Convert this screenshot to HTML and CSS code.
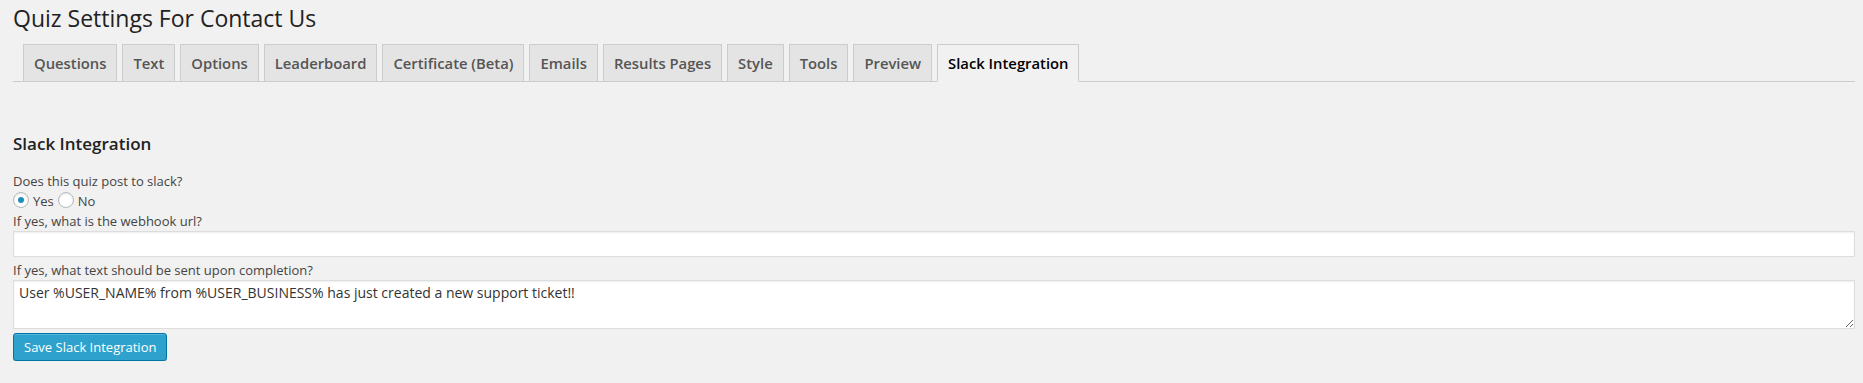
FILE: index.html
```html
<!doctype html>
<html>
    <head>
        <title>Quiz Settings For Contact Us</title>
        <link rel="stylesheet" href="styles.css">
    </head>
    <body>
        <div class="wrap">
            <h1 class="page-title">Quiz Settings For Contact Us</h1>

            <div class="nav-tabs">
                <a class="nav-tab" href="#">Questions</a>
                <a class="nav-tab" href="#">Text</a>
                <a class="nav-tab" href="#">Options</a>
                <a class="nav-tab" href="#">Leaderboard</a>
                <a class="nav-tab" href="#">Certificate (Beta)</a>
                <a class="nav-tab" href="#">Emails</a>
                <a class="nav-tab" href="#">Results Pages</a>
                <a class="nav-tab" href="#">Style</a>
                <a class="nav-tab" href="#">Tools</a>
                <a class="nav-tab" href="#">Preview</a>
                <a class="nav-tab nav-tab-active" href="#">Slack Integration</a>
            </div>

            <h3 class="section-title">Slack Integration</h3>

            <form class="slack-form" onsubmit="return false;">
                <div class="field-label">Does this quiz post to slack?</div>
                <div class="radio-row">
                    <input type="radio" name="slack_post" id="slack_yes" value="1" checked>
                    <label for="slack_yes">Yes</label>
                    <input type="radio" name="slack_post" id="slack_no" value="0">
                    <label for="slack_no">No</label>
                </div>
                <div class="field-label">If yes, what is the webhook url?</div>
                <input type="text" class="text-input" name="slack_url" value="">
                <div class="field-label">If yes, what text should be sent upon completion?</div>
                <textarea class="text-area" name="slack_message">User %USER_NAME% from %USER_BUSINESS% has just created a new support ticket!!</textarea>
                <button type="submit" class="button-primary">Save Slack Integration</button>
            </form>
        </div>
    </body>
</html>
```

FILE: styles.css
```css
body{
    margin: 0;
    background: #f1f1f1;
    color: #444;
    font-family: "Open Sans", sans-serif;
    font-size: 13px;
}
.wrap{
    padding: 0 8px 0 13px;
}
.page-title{
    margin: 0;
    padding-top: 4px;
    font-size: 23px;
    font-weight: 400;
    line-height: 29px;
    color: #222;
}

/* tabs */
.nav-tabs{
    display: flex;
    gap: 5px;
    margin-top: 11px;
    padding-left: 10px;
    border-bottom: 1px solid #ccc;
}
.nav-tab{
    margin-bottom: -1px;
    padding: 6px 10px;
    border: 1px solid #ccc;
    background: #e4e4e4;
    color: #555;
    font-size: 14.8px;
    font-weight: 600;
    line-height: 24px;
    text-decoration: none;
}
.nav-tab-active{
    background: #f1f1f1;
    border-bottom-color: #f1f1f1;
    color: #000;
}

.section-title{
    margin: 49px 0 15px;
    font-size: 17px;
    font-weight: 600;
    line-height: 25px;
    color: #222;
}

/* form */
.field-label{
    line-height: 20px;
}
.radio-row{
    display: flex;
    align-items: center;
    height: 20px;
    line-height: 20px;
}
.radio-row input{
    appearance: none;
    -webkit-appearance: none;
    width: 16px;
    height: 16px;
    margin: -3px 4px 0 0;
    border: 1px solid #b4b9be;
    border-radius: 50%;
    background: #fff;
    box-shadow: inset 0 1px 2px rgba(0,0,0,.1);
    display: flex;
    align-items: center;
    justify-content: center;
}
.radio-row input:checked::before{
    content: "";
    width: 6px;
    height: 6px;
    border-radius: 50%;
    background: #1e8cbe;
}
.radio-row label{
    margin-right: 4px;
}
.text-input{
    display: block;
    box-sizing: border-box;
    width: 100%;
    height: 26px;
    margin: 0 0 3px;
    padding: 3px 5px;
    border: 1px solid #ddd;
    background: #fff;
    box-shadow: inset 0 1px 2px rgba(0,0,0,.07);
    font-family: "Open Sans", sans-serif;
    font-size: 14px;
}
.text-area{
    display: block;
    box-sizing: border-box;
    width: 100%;
    height: 49px;
    margin: 0;
    padding: 2px 5px;
    border: 1px solid #ddd;
    background: #fff;
    box-shadow: inset 0 1px 2px rgba(0,0,0,.07);
    color: #333;
    font-family: "Open Sans", sans-serif;
    font-size: 14px;
    line-height: 20px;
}
.button-primary{
    display: block;
    height: 28px;
    margin-top: 4px;
    padding: 0 10px 1px;
    border: 1px solid #0074a2;
    border-radius: 3px;
    background: #2ea2cc;
    box-shadow: inset 0 1px 0 rgba(120,200,230,.5), 0 1px 0 rgba(0,0,0,.15);
    color: #fff;
    font-family: "Open Sans", sans-serif;
    font-size: 13px;
    line-height: 26px;
    cursor: pointer;
}
```
